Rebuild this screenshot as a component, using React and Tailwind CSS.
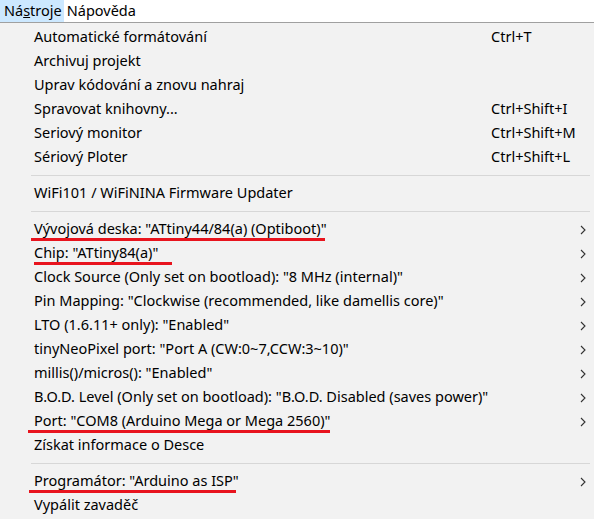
import React from "react";

const Chevron = () => (
  <svg width="6" height="10" viewBox="0 0 6 10" className="block">
    <path d="M1 1 L5 5 L1 9" fill="none" stroke="#333" strokeWidth="1.1" />
  </svg>
);

const Row = ({ label, shortcut, sub, mark }) => (
  <div className="relative flex h-[24px] items-center">
    <span className="pl-[34px] whitespace-nowrap">{label}</span>
    {shortcut && <span className="absolute left-[491px] whitespace-nowrap">{shortcut}</span>}
    {sub && (
      <span className="absolute left-[580px] top-[8px]">
        <Chevron />
      </span>
    )}
    {mark && (
      <span
        className="absolute h-[3px] bg-[#e8141e]"
        style={{ left: mark[0], width: mark[1] - mark[0], top: mark[2] }}
      />
    )}
  </div>
);

const Sep = () => (
  <div className="flex h-[12px] items-center pl-[31px] pr-[4px]">
    <div className="h-px w-full bg-[#d7d7d7]" />
  </div>
);

export default function App() {
  return (
    <div
      className="w-[594px] h-[519px] overflow-hidden bg-[#f2f2f2] text-[14.5px] text-black"
      style={{ fontFamily: '"Noto Sans", "Open Sans", sans-serif' }}
    >
      <div className="flex h-[22px] items-center bg-white border-b border-[#a0a0a0] box-content">
        <div className="h-full flex items-center pl-[4px] pr-[2px] bg-[#cce8ff]">
          Ná<span className="underline">s</span>troje
        </div>
        <div className="px-[3px]">Nápověda</div>
      </div>
      <div className="pt-[2px]">
        <Row label="Automatické formátování" shortcut="Ctrl+T" />
        <Row label="Archivuj projekt" />
        <Row label="Uprav kódování a znovu nahraj" />
        <Row label="Spravovat knihovny..." shortcut="Ctrl+Shift+I" />
        <Row label="Seriový monitor" shortcut="Ctrl+Shift+M" />
        <Row label="Sériový Ploter" shortcut="Ctrl+Shift+L" />
        <Sep />
        <Row label="WiFi101 / WiFiNINA Firmware Updater" />
        <Sep />
        <Row label={'Vývojová deska: "ATtiny44/84(a) (Optiboot)"'} sub mark={[31, 325, 21]} />
        <Row label={'Chip: "ATtiny84(a)"'} sub mark={[34, 172, 21]} />
        <Row label={'Clock Source (Only set on bootload): "8 MHz (internal)"'} sub />
        <Row label={'Pin Mapping: "Clockwise (recommended, like damellis core)"'} sub />
        <Row label={'LTO (1.6.11+ only): "Enabled"'} sub />
        <Row label={'tinyNeoPixel port: "Port A (CW:0~7,CCW:3~10)"'} sub />
        <Row label={'millis()/micros(): "Enabled"'} sub />
        <Row label={'B.O.D. Level (Only set on bootload): "B.O.D. Disabled (saves power)"'} sub />
        <Row label={'Port: "COM8 (Arduino Mega or Mega 2560)"'} sub mark={[28, 330, 21]} />
        <Row label="Získat informace o Desce" />
        <Sep />
        <Row label={'Programátor: "Arduino as ISP"'} sub mark={[29, 236, 21]} />
        <Row label="Vypálit zavaděč" />
      </div>
    </div>
  );
}
